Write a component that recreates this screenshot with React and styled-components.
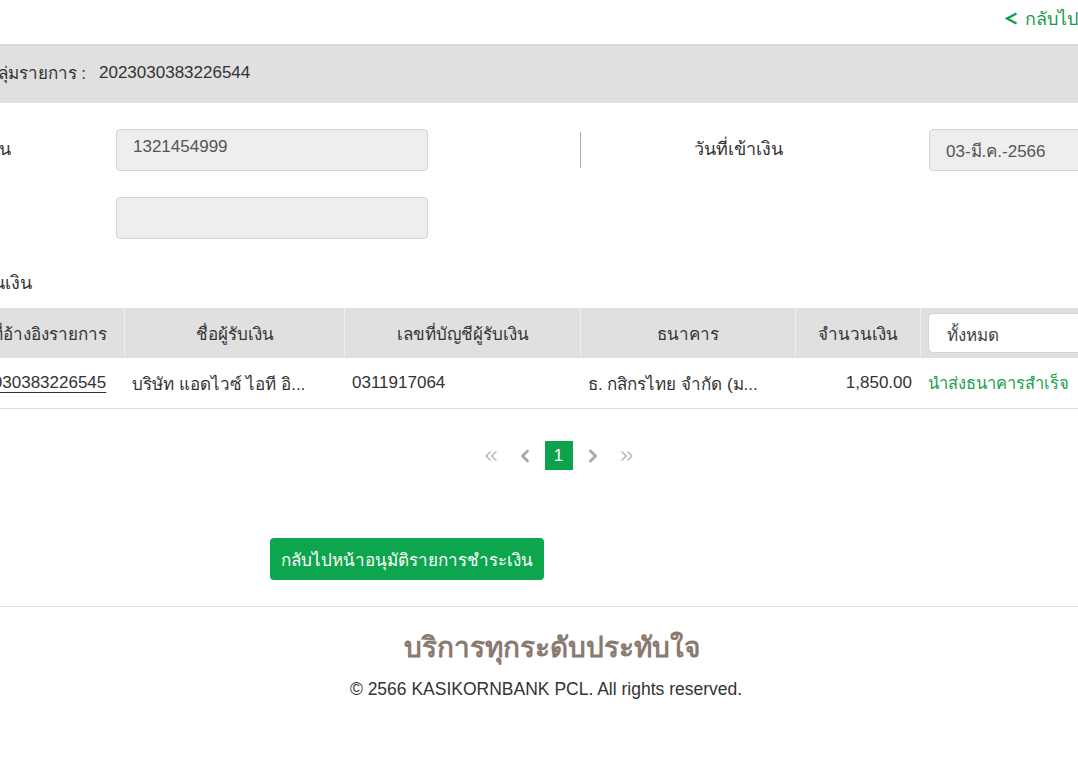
import styled, { createGlobalStyle } from 'styled-components';
import { ChevronLeft, ChevronRight, ChevronsLeft, ChevronsRight } from 'lucide-react';

const GlobalStyle = createGlobalStyle`
  html, body {
    margin: 0;
    padding: 0;
    background: #ffffff;
    overflow: hidden;
  }
  body {
    font-family: "Liberation Sans", "Noto Sans", "DejaVu Sans", sans-serif;
    color: #333333;
  }
`;

const Page = styled.div`
  width: 1300px;
  margin-left: -100px;
`;

const TopBar = styled.div`
  height: 44px;
  display: flex;
  align-items: center;
  padding-left: 1105px;
`;

const BackLink = styled.a`
  display: inline-flex;
  align-items: center;
  gap: 7px;
  color: #17994a;
  font-size: 18px;
  white-space: nowrap;
  text-decoration: none;
  margin-top: -8px;
`;

const GroupBar = styled.div`
  height: 59px;
  box-sizing: border-box;
  background: #e0e0e0;
  border-top: 2px solid #d8d8d8;
  display: flex;
  align-items: center;
  gap: 13px;
  padding-bottom: 4px;
  font-size: 17px;
`;

const GroupLabel = styled.span`
  width: 186px;
  flex-shrink: 0;
  display: flex;
  justify-content: flex-end;
  white-space: nowrap;
`;

const Form = styled.div`
  margin-top: 26px;
  display: flex;
  flex-direction: column;
  gap: 26px;
`;

const FormRow = styled.div`
  display: flex;
  align-items: center;
  height: 42px;
`;

const FieldLabel = styled.div`
  width: 111px;
  margin-right: 105px;
  flex-shrink: 0;
  display: flex;
  justify-content: flex-end;
  font-size: 18px;
  white-space: nowrap;
  margin-top: -3px;
`;

const InputBox = styled.div`
  width: 312px;
  height: 42px;
  flex-shrink: 0;
  box-sizing: border-box;
  background: #eeeeee;
  border: 1px solid #d4d4d4;
  border-radius: 4px;
  padding: 7px 16px;
  font-size: 17px;
  color: #555555;
  margin-left: ${({ $offset }) => $offset || 0}px;
`;

const Divider = styled.div`
  width: 1px;
  height: 36px;
  flex-shrink: 0;
  background: #aaaaaa;
  margin-left: 152px;
`;

const SideLabel = styled.div`
  width: 314px;
  flex-shrink: 0;
  text-align: center;
  font-size: 18px;
  margin-top: -4px;
`;

const SectionTitle = styled.div`
  margin-top: 32px;
  width: 132px;
  display: flex;
  justify-content: flex-end;
  font-size: 18px;
  line-height: 24px;
  white-space: nowrap;
`;

const TableWrap = styled.div`
  margin-top: 13px;
  margin-left: 47px;
  width: 1223px;
`;

const columns = '177px 220px 236px 215px 125px 250px';

const HeaderRow = styled.div`
  display: grid;
  grid-template-columns: ${columns};
  height: 50px;
  background: #e0e0e0;
`;

const HeadCell = styled.div`
  display: flex;
  align-items: center;
  justify-content: center;
  font-size: 17px;
  white-space: nowrap;
  border-left: ${({ $first }) => ($first ? 'none' : '1px solid #efefef')};
`;

const FilterCell = styled.div`
  display: flex;
  align-items: center;
  padding-left: 7px;
  border-left: 1px solid #efefef;
`;

const Select = styled.div`
  width: 100%;
  height: 40px;
  box-sizing: border-box;
  background: #ffffff;
  border: 1px solid #d4d4d4;
  border-radius: 5px;
  padding: 7px 18px;
  font-size: 17px;
  color: #444444;
`;

const DataRow = styled.div`
  display: grid;
  grid-template-columns: ${columns};
  height: 50px;
  border-bottom: 1px solid #dddddd;
`;

const Cell = styled.div`
  display: flex;
  align-items: center;
  justify-content: ${({ $right }) => ($right ? 'flex-end' : 'flex-start')};
  padding: 0 8px;
  font-size: ${({ $small }) => ($small ? '16.5px' : '17px')};
  color: ${({ $green }) => ($green ? '#20a050' : '#333333')};
  white-space: nowrap;
  overflow: hidden;
`;

const RefLink = styled.a`
  color: #333333;
  text-decoration: underline;
  text-underline-offset: 4px;
`;

const Pager = styled.div`
  margin-top: 32px;
  display: flex;
  justify-content: center;
  gap: 6px;
`;

const PageItem = styled.div`
  width: 28px;
  height: 29px;
  display: flex;
  align-items: center;
  justify-content: center;
  font-size: 17px;
  color: ${({ $active }) => ($active ? '#ffffff' : '#aaaaaa')};
  background: ${({ $active }) => ($active ? '#0ea24d' : 'transparent')};
`;

const ActionButton = styled.button`
  display: block;
  margin-top: 68px;
  margin-left: 370px;
  width: 274px;
  height: 42px;
  border: none;
  border-radius: 4px;
  background: #0ea54f;
  color: #ffffff;
  font-family: inherit;
  font-size: 17px;
  white-space: nowrap;
  padding: 0;
`;

const Rule = styled.hr`
  margin: 26px 0 0;
  border: none;
  border-top: 1px solid #e3e3e3;
`;

const Footer = styled.footer`
  text-align: center;
  padding-top: 24px;
`;

const Slogan = styled.div`
  font-size: 28px;
  line-height: 34px;
  font-weight: 700;
  color: #8a7b72;
  padding-left: 4px;
`;

const Copyright = styled.div`
  margin-top: 13px;
  font-size: 17.5px;
  line-height: 22px;
  color: #333333;
  padding-right: 8px;
`;

const BackArrow = () => (
  <svg width="13" height="13" viewBox="0 0 13 13" fill="none">
    <path d="M11.5 1.5 L2 6.5 L11.5 11.5" stroke="currentColor" strokeWidth="2.4" strokeLinejoin="miter" />
  </svg>
);

const App = () => {
  return (
    <>
      <GlobalStyle />
      <Page>
        <TopBar>
          <BackLink href="#">
            <BackArrow />
            กลับไปหน้าก่อนหน้า
          </BackLink>
        </TopBar>

        <GroupBar>
          <GroupLabel>เลขที่กลุ่มรายการ :</GroupLabel>
          <span>2023030383226544</span>
        </GroupBar>

        <Form>
          <FormRow>
            <FieldLabel>บัญชีผู้โอนเงิน</FieldLabel>
            <InputBox>1321454999</InputBox>
            <Divider />
            <SideLabel>วันที่เข้าเงิน</SideLabel>
            <InputBox $offset={34}>03-มี.ค.-2566</InputBox>
          </FormRow>
          <FormRow>
            <FieldLabel />
            <InputBox />
          </FormRow>
        </Form>

        <SectionTitle>รายการโอนเงิน</SectionTitle>

        <TableWrap>
          <HeaderRow>
            <HeadCell $first>เลขที่อ้างอิงรายการ</HeadCell>
            <HeadCell>ชื่อผู้รับเงิน</HeadCell>
            <HeadCell>เลขที่บัญชีผู้รับเงิน</HeadCell>
            <HeadCell>ธนาคาร</HeadCell>
            <HeadCell>จำนวนเงิน</HeadCell>
            <FilterCell>
              <Select>ทั้งหมด</Select>
            </FilterCell>
          </HeaderRow>
          <DataRow>
            <Cell>
              <RefLink href="#">2023030383226545</RefLink>
            </Cell>
            <Cell>บริษัท แอดไวซ์ ไอที อิ...</Cell>
            <Cell>0311917064</Cell>
            <Cell>ธ. กสิกรไทย จำกัด (ม...</Cell>
            <Cell $right>1,850.00</Cell>
            <Cell $small $green>นำส่งธนาคารสำเร็จ</Cell>
          </DataRow>

          <Pager>
            <PageItem><ChevronsLeft size={20} strokeWidth={1.5} /></PageItem>
            <PageItem><ChevronLeft size={20} strokeWidth={3.5} /></PageItem>
            <PageItem $active>1</PageItem>
            <PageItem><ChevronRight size={20} strokeWidth={3.5} /></PageItem>
            <PageItem><ChevronsRight size={20} strokeWidth={1.5} /></PageItem>
          </Pager>
        </TableWrap>

        <ActionButton>กลับไปหน้าอนุมัติรายการชำระเงิน</ActionButton>

        <Rule />

        <Footer>
          <Slogan>บริการทุกระดับประทับใจ</Slogan>
          <Copyright>© 2566 KASIKORNBANK PCL. All rights reserved.</Copyright>
        </Footer>
      </Page>
    </>
  );
};

export default App;
